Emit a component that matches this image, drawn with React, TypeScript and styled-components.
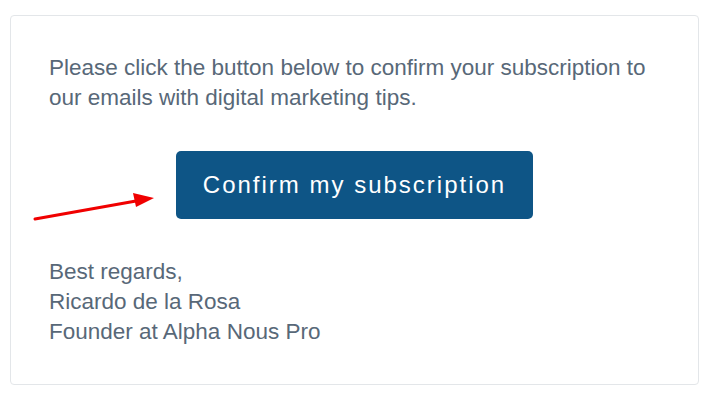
import React from "react";
import styled, { createGlobalStyle } from "styled-components";

const Global = createGlobalStyle`
  html, body { margin: 0; padding: 0; background: #ffffff; }
  body { font-family: "Liberation Sans", Arial, sans-serif; }
`;

const Page = styled.div`
  position: relative;
  padding: 15px 14px 0 10px;
  width: 713px;
  height: 400px;
  box-sizing: border-box;
`;

const Card = styled.div`
  border: 1px solid #e3e6e9;
  border-radius: 4px;
  padding: 37px 38px 37px 38px;
  background: #fff;
  display: flex;
  flex-direction: column;
  gap: 38px;
`;

const Text = styled.p`
  margin: 0;
  font-size: 22.5px;
  line-height: 30px;
  color: #586878;
`;

const ButtonRow = styled.div`
  display: flex;
  justify-content: center;
`;

const Button = styled.a`
  display: inline-flex;
  align-items: center;
  justify-content: center;
  height: 68px;
  padding: 0 27px;
  background: #0e5586;
  color: #ffffff;
  border-radius: 5px;
  font-size: 24px;
  letter-spacing: 2px;
  text-decoration: none;
`;

const Arrow = styled.svg`
  position: absolute;
  left: 30px;
  top: 190px;
  overflow: visible;
`;

export default function App() {
  return (
    <>
      <Global />
      <Page>
        <Card>
          <Text>
            Please click the button below to confirm your subscription to our emails with digital marketing tips.
          </Text>
          <ButtonRow>
            <Button href="#">Confirm my subscription</Button>
          </ButtonRow>
          <Text>
            Best regards,
            <br />
            Ricardo de la Rosa
            <br />
            Founder at Alpha Nous Pro
          </Text>
        </Card>
        <Arrow width="130" height="35" viewBox="0 0 130 35">
          <line x1="5" y1="29" x2="106" y2="11" stroke="#f00000" strokeWidth="3" strokeLinecap="round" />
          <polygon points="124,8 103,3 106,17" fill="#f00000" />
        </Arrow>
      </Page>
    </>
  );
}
